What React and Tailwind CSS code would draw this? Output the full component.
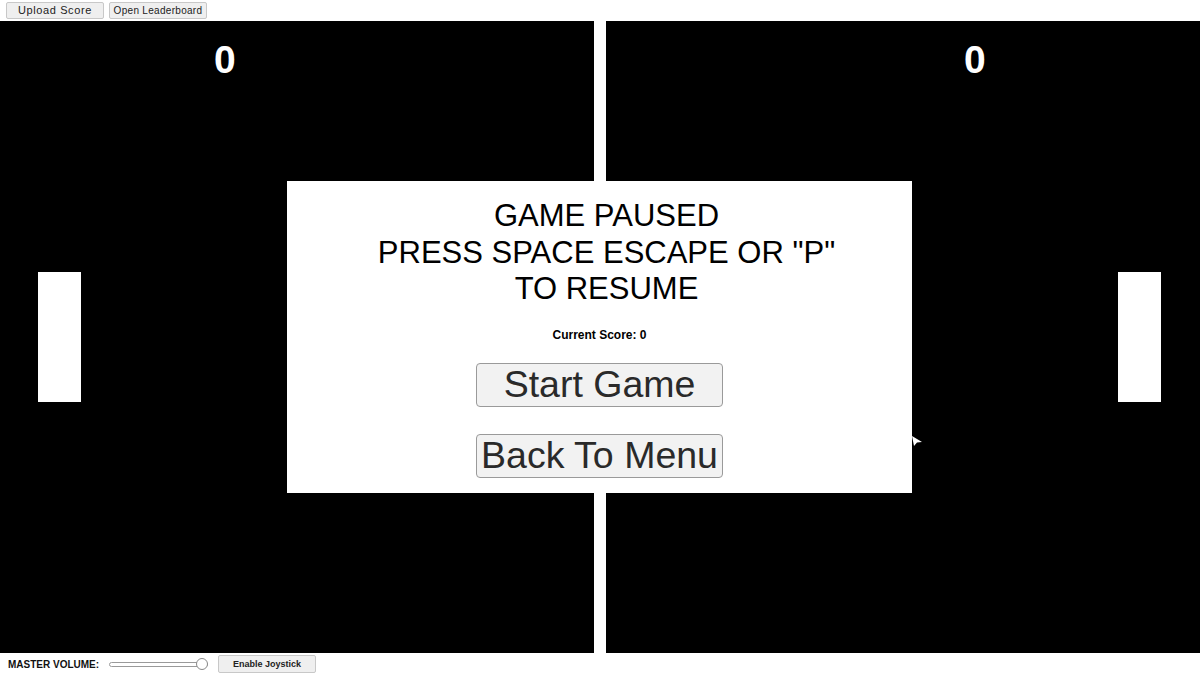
import React from "react";

const sans = { fontFamily: '"Liberation Sans", Arial, sans-serif' };

const Court = ({ score, paddleSide }) => (
  <div className="relative flex-1 bg-black">
    <div className="flex h-full flex-col">
      <div
        className={`flex pt-[19px] ${paddleSide === "left" ? "pl-[214px]" : "pl-[358px]"}`}
      >
        <span className="text-[39px] font-bold leading-[40px] text-white">{score}</span>
      </div>
      <div
        className={`mt-[192px] flex ${paddleSide === "left" ? "pl-[38px]" : "pl-[512px]"}`}
      >
        <div className="h-[130px] w-[43px] bg-white" />
      </div>
    </div>
  </div>
);

// plain slider look: outlined track with the knob pushed to the right end
const VolumeSlider = () => (
  <div className="relative ml-[10px] flex h-[12px] w-[99px] items-center">
    <div className="h-[5px] w-full rounded-full border border-[#9a9a9a] bg-white" />
    <div className="absolute right-0 top-0 h-[12px] w-[12px] rounded-full border border-[#8a8a8a] bg-white" />
  </div>
);

const App = () => {
  const score = 0;

  return (
    <div className="flex h-[675px] w-[1200px] flex-col overflow-hidden bg-white" style={sans}>
      {/* top toolbar */}
      <div className="flex h-[21px] items-start gap-[5px] pl-[6px] pt-[2px]">
        <button className="h-[17px] w-[98px] rounded-[2px] border border-[#c8c8c8] bg-[#efefef] text-[11px] leading-none tracking-[0.6px] text-[#222]">
          Upload Score
        </button>
        <button className="h-[17px] w-[98px] rounded-[2px] border border-[#c8c8c8] bg-[#efefef] text-[10px] leading-none tracking-[0.3px] text-[#222]">
          Open Leaderboard
        </button>
      </div>

      {/* play field */}
      <div className="relative flex h-[632px] gap-[12px]">
        <Court score={score} paddleSide="left" />
        <Court score={score} paddleSide="right" />

        {/* pause dialog */}
        <div className="absolute left-[287px] top-[160px] flex h-[312px] w-[625px] flex-col items-center bg-white pt-[17px]">
          <div className="pl-[14px] text-center text-[31px] leading-[36.5px] text-black">
            <div>GAME PAUSED</div>
            <div>PRESS SPACE ESCAPE OR "P"</div>
            <div>TO RESUME</div>
          </div>
          <div className="mt-[20px] text-[12px] font-bold leading-[14px] text-black">
            Current Score: {score}
          </div>
          <button className="mt-[21px] flex h-[44px] w-[247px] items-center justify-center rounded-[4px] border border-[#9a9a9a] bg-[#f2f2f2] text-[37.5px] leading-none text-[#2a2a2a]">
            Start Game
          </button>
          <button className="mt-[27px] flex h-[44px] w-[247px] items-center justify-center rounded-[4px] border border-[#9a9a9a] bg-[#f2f2f2] text-[37.5px] leading-none text-[#2a2a2a]">
            Back To Menu
          </button>
        </div>

        {/* mouse pointer */}
        <svg className="absolute left-[911px] top-[414px]" width="12" height="12" viewBox="0 0 12 12">
          <path d="M1 1 L11 7 L6 7.5 L3 11 Z" fill="#fff" />
        </svg>
      </div>

      {/* bottom controls */}
      <div className="flex h-[22px] items-center pl-[8px]">
        <span className="text-[10px] font-bold text-[#111]">MASTER VOLUME:</span>
        <VolumeSlider />
        <button className="ml-[10px] h-[18px] w-[98px] rounded-[2px] border border-[#c8c8c8] bg-[#efefef] text-[9px] font-bold leading-none text-[#222]">
          Enable Joystick
        </button>
      </div>
    </div>
  );
};

export default App;
